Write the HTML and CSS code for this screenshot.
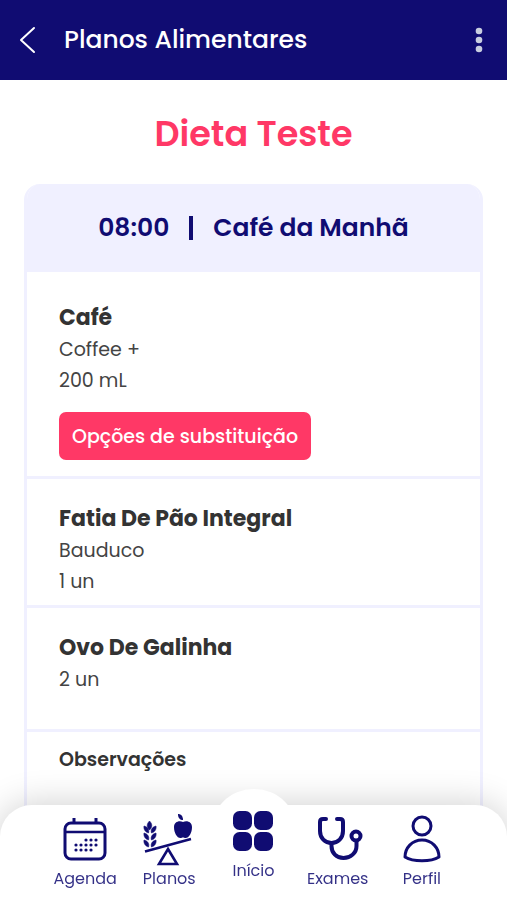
FILE: index.html
```html
<!DOCTYPE html>
<html lang="pt-BR">
<head>
<meta charset="utf-8">
<meta name="viewport" content="width=device-width, initial-scale=1">
<title>Planos Alimentares</title>
<link rel="stylesheet" href="styles.css">
</head>
<body>
<div class="app">
  <header class="topbar">
    <button class="icon-button" type="button" aria-label="Voltar">
      <svg width="16" height="28" viewBox="0 0 16 28" fill="none" stroke="currentColor" stroke-width="2" stroke-linecap="round" stroke-linejoin="round"><path d="M14 2 1 14l13 12"/></svg>
    </button>
    <h1 class="topbar-title">Planos Alimentares</h1>
    <button class="icon-button more" type="button" aria-label="Mais opções">
      <svg width="8" height="26" viewBox="0 0 8 26" fill="currentColor"><circle cx="4" cy="4" r="3.3"/><circle cx="4" cy="13" r="3.3"/><circle cx="4" cy="22" r="3.3"/></svg>
    </button>
  </header>

  <main class="content">
    <h2 class="plan-title">Dieta Teste</h2>
    <section class="meal">
      <h3 class="meal-header"><span>08:00</span><span class="divider"></span><span>Café da Manhã</span></h3>
      <div class="foods">
        <article class="food">
          <h4 class="food-name">Café</h4>
          <p class="food-line">Coffee +</p>
          <p class="food-line">200 mL</p>
          <button class="swap" type="button">Opções de substituição</button>
        </article>
        <article class="food">
          <h4 class="food-name">Fatia De Pão Integral</h4>
          <p class="food-line">Bauduco</p>
          <p class="food-line">1 un</p>
        </article>
        <article class="food food-spaced">
          <h4 class="food-name">Ovo De Galinha</h4>
          <p class="food-line">2 un</p>
        </article>
      </div>
      <div class="notes">
        <h4 class="notes-title">Observações</h4>
      </div>
    </section>
  </main>

  <nav class="tabs">
    <a class="tab" href="#agenda">
      <svg width="52" height="52" viewBox="0 0 52 52" fill="none" stroke="currentColor" stroke-width="3">
        <rect x="6" y="8" width="40" height="36" rx="6"/>
        <path d="M6 17h40" stroke-width="2.6"/>
        <path d="M15 3v5M37 3v5"/>
        <g stroke-linecap="round" stroke-width="3.2"><path d="M27 25h0M32 25h0M37 25h0M17 30h0M22 30h0M27 30h0M32 30h0M37 30h0M17 35h0M22 35h0M27 35h0M32 35h0"/></g>
      </svg>
      <span>Agenda</span>
    </a>
    <a class="tab" href="#planos">
      <svg width="52" height="52" viewBox="0 0 52 52" fill="currentColor">
        <path d="M40 7c-4-2-9 0-9 5 0 6 3 11 6.500 11 1 0 1.500-.5 2.500-.5s1.500.5 2.500.5c3.500 0 6.500-5 6.500-11 0-5-5-7-9-5Z"/>
        <path d="M40 5c-3 0-5-2-5-6 3 0 5 2 5 6Z"/>
        <path d="M6.500 6c3 3 3 6 0 9-3-3-3-6 0-9ZM1 11c4 1 5.500 4 4.500 7-3.500-1-5-4-4.500-7ZM1 18c4 1 5.500 4 4.500 7-3.500-1-5-4-4.500-7ZM1 25c4 1 5.500 4 4.500 7-3.500-1-5-4-4.500-7ZM13 11c-4 1-5.500 4-4.500 7 3.500-1 5-4 4.500-7ZM13 18c-4 1-5.500 4-4.500 7 3.500-1 5-4 4.500-7ZM13 25c-4 1-5.500 4-4.500 7 3.500-1 5-4 4.500-7Z" stroke="currentColor" stroke-width=".6"/>
        <path d="M2 36.500 48 24M25 34l9 15H16Z" fill="none" stroke="currentColor" stroke-width="2.6"/>
      </svg>
      <span>Planos</span>
    </a>
    <a class="tab tab-home" href="#inicio" aria-current="page">
      <svg width="52" height="52" viewBox="0 0 52 52" fill="currentColor">
        <rect x="6" y="4" width="19" height="19" rx="6.500"/><rect x="27" y="4" width="19" height="19" rx="6.500"/>
        <rect x="6" y="25" width="19" height="19" rx="6.500"/><rect x="27" y="25" width="19" height="19" rx="6.500"/>
      </svg>
      <span>Início</span>
    </a>
    <a class="tab" href="#exames">
      <svg width="52" height="52" viewBox="0 0 52 52" fill="none" stroke="currentColor" stroke-width="4" stroke-linecap="round" stroke-linejoin="round">
        <path d="M14 4h-3Q8 4 8 7v9c0 7 5 12 11.500 12S31 23 31 16V7q0-3-3-3h-3"/>
        <path d="M19.500 28v3c0 7 5 12 12 12s13-5 13-12v-4"/>
        <circle cx="44" cy="21" r="4.500"/>
      </svg>
      <span>Exames</span>
    </a>
    <a class="tab" href="#perfil">
      <svg width="52" height="52" viewBox="0 0 52 52" fill="none" stroke="currentColor" stroke-width="3" stroke-linejoin="round">
        <circle cx="26" cy="11" r="9"/>
        <path d="M9 42c0-9 7-17 17-17s17 8 17 17c-8 5-26 5-34 0Z"/>
      </svg>
      <span>Perfil</span>
    </a>
  </nav>
</div>
</body>
</html>
```

FILE: styles.css
```css
* {
  box-sizing: border-box;
}

body {
  margin: 0;
  background: #fff;
  color: #333;
  font-family: Poppins, Inter, "Open Sans", sans-serif;
}

h1, h2, h3, h4, p {
  margin: 0;
}

button {
  font: inherit;
  border: 0;
  cursor: pointer;
}

svg {
  display: block;
  overflow: visible;
}

.app {
  height: 100vh;
  overflow: hidden;
}

.topbar {
  display: flex;
  align-items: center;
  gap: 28px;
  height: 80px;
  padding: 0 20px;
  background: #100c72;
  color: #fff;
}

.icon-button {
  padding: 0;
  background: none;
  color: inherit;
}

.more {
  padding: 0 4px;
  color: #c9cfe0;
}

.topbar-title {
  flex: 1;
  font-size: 25px;
  font-weight: 500;
  line-height: 40px;
}

.content {
  padding: 28px 24px 0;
}

.plan-title {
  margin-bottom: 24px;
  color: #ff3866;
  font-size: 35px;
  font-weight: 600;
  line-height: 52px;
  text-align: center;
}

.meal {
  min-height: 100vh;
  overflow: hidden;
  border: solid #f0f0ff;
  border-width: 0 3px;
  border-radius: 16px 16px 0 0;
}

.meal-header {
  display: flex;
  align-items: center;
  justify-content: center;
  gap: 20px;
  height: 88px;
  background: #f0f0ff;
  color: #100c72;
  font-size: 25px;
  font-weight: 600;
}

.divider {
  width: 4px;
  height: 24px;
  background: currentColor;
}

.foods {
  padding-top: 6px;
}

.food {
  padding: 24px 32px 8px;
  border-bottom: 3px solid #f0f0ff;
}

.food-spaced {
  padding-bottom: 34px;
}

.food-name {
  font-size: 22px;
  font-weight: 700;
  line-height: 32px;
}

.food-line {
  color: #444;
  font-size: 19px;
  line-height: 31px;
}

.swap {
  display: block;
  height: 48px;
  margin: 16px 0 8px;
  padding: 0 13px;
  border-radius: 7px;
  background: #ff3866;
  color: #fff;
  font-size: 19px;
  font-weight: 500;
}

.notes {
  padding: 12px 32px;
}

.notes-title {
  font-size: 19px;
  font-weight: 600;
  line-height: 32px;
}

.tabs {
  position: fixed;
  inset: auto 0 0;
  display: grid;
  grid-template-columns: repeat(5, 1fr);
  height: 95px;
  padding: 10px 43px 0;
  border-radius: 32px 32px 0 0;
  background: #fff;
  box-shadow: 0 0 36px rgb(0 0 0 / 20%);
}

/* Raised circle behind the home tab */
.tabs::before {
  content: "";
  position: absolute;
  top: -16px;
  left: 50%;
  width: 88px;
  height: 88px;
  margin-left: -44px;
  border-radius: 50%;
  background: #fff;
}

.tab {
  position: relative;
  display: flex;
  flex-direction: column;
  align-items: center;
  color: #100c72;
  font-size: 16px;
  line-height: 24px;
  text-decoration: none;
}

.tab span {
  opacity: 0.85;
}

.tab-home {
  margin-top: -8px;
}
```
